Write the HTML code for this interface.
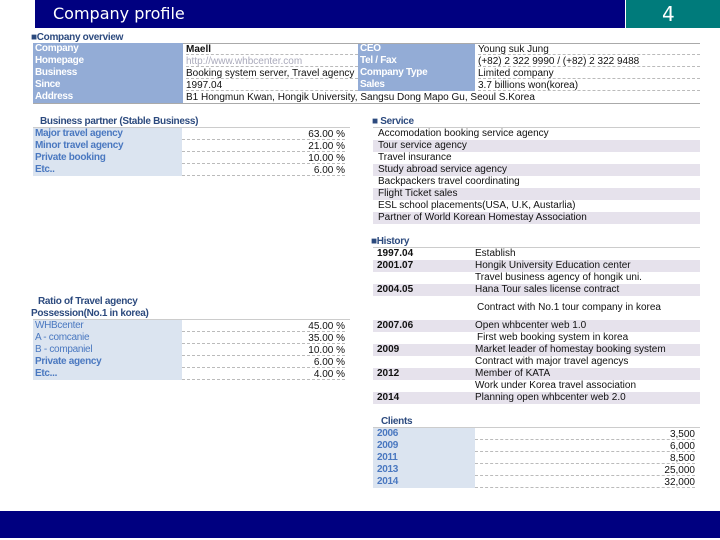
<!DOCTYPE html><html><head><style>
*{box-sizing:border-box}
body{margin:0;width:720px;height:540px;background:#fff;position:relative;overflow:hidden;font-family:"Liberation Sans",sans-serif;font-size:10px;color:#111}
div{position:absolute;white-space:nowrap}
.r{height:12px;line-height:12px}
.lb{color:#fff;font-weight:bold;letter-spacing:-0.3px}
.lt{color:#4a78c0;font-weight:bold;letter-spacing:-0.3px}
.hd{color:#2c4a7e;font-weight:bold;letter-spacing:-0.3px}
.dl{border-bottom:1px dashed #bbb;line-height:13px}
.sh{background:#e6e2ec}
.bl{background:#dbe4f0}
</style></head><body>
<div style="left:35px;top:0;width:590px;height:28px;background:#000080"></div>
<div style="left:53px;top:4px;color:#fff;font-size:16px;font-family:'DejaVu Sans',sans-serif">Company profile</div>
<div style="left:625px;top:0;width:95px;height:28px;background:#007b7b;border-left:1px solid #fff"></div>
<div style="left:662px;top:2px;color:#fff;font-size:20px;font-family:'DejaVu Sans',sans-serif">4</div>

<div class="hd" style="left:31px;top:32px">■Company overview</div>
<div style="left:33px;top:43px;width:150px;height:60px;background:#93acd6"></div>
<div style="left:358px;top:43px;width:117px;height:48px;background:#93acd6"></div>
<div style="left:183px;top:43px;width:517px;border-top:1px solid #aaa"></div>
<div style="left:33px;top:103px;width:667px;border-top:1px solid #aaa"></div>
<div class="r lb" style="left:35px;top:43px">Company</div>
<div class="r lb" style="left:35px;top:55px">Homepage</div>
<div class="r lb" style="left:35px;top:67px">Business</div>
<div class="r lb" style="left:35px;top:79px">Since</div>
<div class="r lb" style="left:35px;top:91px">Address</div>
<div class="r dl" style="left:186px;top:43px;width:172px;font-weight:bold">Maell</div>
<div class="r dl" style="left:186px;top:55px;width:172px;color:#aab">http://www.whbcenter.com</div>
<div class="r dl" style="left:186px;top:67px;width:172px">Booking system server, Travel agency</div>
<div class="r dl" style="left:186px;top:79px;width:172px">1997.04</div>
<div class="r" style="left:186px;top:91px;line-height:13px">B1 Hongmun Kwan, Hongik University, Sangsu Dong Mapo Gu, Seoul S.Korea</div>
<div class="r lb" style="left:360px;top:43px">CEO</div>
<div class="r lb" style="left:360px;top:55px">Tel / Fax</div>
<div class="r lb" style="left:360px;top:67px">Company Type</div>
<div class="r lb" style="left:360px;top:79px">Sales</div>
<div class="r dl" style="left:478px;top:43px;width:222px">Young suk Jung</div>
<div class="r dl" style="left:478px;top:55px;width:222px">(+82) 2 322 9990 / (+82) 2 322 9488</div>
<div class="r dl" style="left:478px;top:67px;width:222px">Limited company</div>
<div class="r dl" style="left:478px;top:79px;width:222px">3.7 billions won(korea)</div>

<div class="hd" style="left:40px;top:116px">Business partner (Stable Business)</div>
<div style="left:33px;top:127px;width:317px;border-top:1px solid #ccc"></div>
<div class="bl" style="left:33px;top:128px;width:149px;height:48px"></div>
<div class="r lt" style="left:35px;top:128px">Major travel agency</div>
<div class="r lt" style="left:35px;top:140px">Minor travel agency</div>
<div class="r lt" style="left:35px;top:152px">Private booking</div>
<div class="r lt" style="left:35px;top:164px">Etc..</div>
<div class="r dl" style="left:182px;top:128px;width:163px;text-align:right">63.00 %</div>
<div class="r dl" style="left:182px;top:140px;width:163px;text-align:right">21.00 %</div>
<div class="r dl" style="left:182px;top:152px;width:163px;text-align:right">10.00 %</div>
<div class="r dl" style="left:182px;top:164px;width:163px;text-align:right">6.00 %</div>

<div class="hd" style="left:372px;top:116px">■ Service</div>
<div style="left:373px;top:127px;width:327px;border-top:1px solid #ccc"></div>
<div class="r" style="left:373px;top:128px;width:327px;padding-left:5px">Accomodation booking service agency</div>
<div class="r sh" style="left:373px;top:140px;width:327px;padding-left:5px">Tour service agency</div>
<div class="r" style="left:373px;top:152px;width:327px;padding-left:5px">Travel insurance</div>
<div class="r sh" style="left:373px;top:164px;width:327px;padding-left:5px">Study abroad service agency</div>
<div class="r" style="left:373px;top:176px;width:327px;padding-left:5px">Backpackers travel coordinating</div>
<div class="r sh" style="left:373px;top:188px;width:327px;padding-left:5px">Flight Ticket sales</div>
<div class="r" style="left:373px;top:200px;width:327px;padding-left:5px">ESL school placements(USA, U.K, Austarlia)</div>
<div class="r sh" style="left:373px;top:212px;width:327px;padding-left:5px">Partner of World Korean Homestay Association</div>

<div class="hd" style="left:371px;top:236px">■History</div>
<div style="left:373px;top:247px;width:327px;border-top:1px solid #ccc"></div>
<div class="r" style="left:373px;top:248px;width:327px"><b style="margin-left:4px">1997.04</b><span style="position:absolute;left:102px">Establish</span></div>
<div class="r sh" style="left:373px;top:260px;width:327px"><b style="margin-left:4px">2001.07</b><span style="position:absolute;left:102px">Hongik University Education center</span></div>
<div class="r" style="left:373px;top:272px;width:327px"><span style="position:absolute;left:102px">Travel business agency of hongik uni.</span></div>
<div class="r sh" style="left:373px;top:284px;width:327px"><b style="margin-left:4px">2004.05</b><span style="position:absolute;left:102px">Hana Tour sales license contract</span></div>
<div class="r" style="left:373px;top:302px;width:327px"><span style="position:absolute;left:104px">Contract with No.1 tour company in korea</span></div>
<div class="r sh" style="left:373px;top:320px;width:327px"><b style="margin-left:4px">2007.06</b><span style="position:absolute;left:102px">Open whbcenter web 1.0</span></div>
<div class="r" style="left:373px;top:332px;width:327px"><span style="position:absolute;left:104px">First web booking system in korea</span></div>
<div class="r sh" style="left:373px;top:344px;width:327px"><b style="margin-left:4px">2009</b><span style="position:absolute;left:102px">Market leader of homestay booking system</span></div>
<div class="r" style="left:373px;top:356px;width:327px"><span style="position:absolute;left:102px">Contract with major travel agencys</span></div>
<div class="r sh" style="left:373px;top:368px;width:327px"><b style="margin-left:4px">2012</b><span style="position:absolute;left:102px">Member of KATA</span></div>
<div class="r" style="left:373px;top:380px;width:327px"><span style="position:absolute;left:102px">Work under Korea travel association</span></div>
<div class="r sh" style="left:373px;top:392px;width:327px"><b style="margin-left:4px">2014</b><span style="position:absolute;left:102px">Planning open whbcenter web 2.0</span></div>

<div class="hd" style="left:38px;top:296px">Ratio of Travel agency</div>
<div class="hd" style="left:31px;top:308px">Possession(No.1 in korea)</div>
<div style="left:33px;top:319px;width:317px;border-top:1px solid #ccc"></div>
<div class="bl" style="left:33px;top:320px;width:149px;height:60px"></div>
<div class="r lt" style="left:35px;top:320px;font-weight:normal">WHBcenter</div>
<div class="r lt" style="left:35px;top:332px;font-weight:normal">A - comcanie</div>
<div class="r lt" style="left:35px;top:344px;font-weight:normal">B - companiel</div>
<div class="r lt" style="left:35px;top:356px">Private agency</div>
<div class="r lt" style="left:35px;top:368px">Etc...</div>
<div class="r dl" style="left:182px;top:320px;width:163px;text-align:right">45.00 %</div>
<div class="r dl" style="left:182px;top:332px;width:163px;text-align:right">35.00 %</div>
<div class="r dl" style="left:182px;top:344px;width:163px;text-align:right">10.00 %</div>
<div class="r dl" style="left:182px;top:356px;width:163px;text-align:right">6.00 %</div>
<div class="r dl" style="left:182px;top:368px;width:163px;text-align:right">4.00 %</div>

<div class="hd" style="left:381px;top:416px">Clients</div>
<div style="left:373px;top:427px;width:327px;border-top:1px solid #ccc"></div>
<div class="bl" style="left:373px;top:428px;width:102px;height:60px"></div>
<div class="r lt" style="left:377px;top:428px">2006</div>
<div class="r lt" style="left:377px;top:440px">2009</div>
<div class="r lt" style="left:377px;top:452px">2011</div>
<div class="r lt" style="left:377px;top:464px">2013</div>
<div class="r lt" style="left:377px;top:476px">2014</div>
<div class="r dl" style="left:475px;top:428px;width:220px;text-align:right">3,500</div>
<div class="r dl" style="left:475px;top:440px;width:220px;text-align:right">6,000</div>
<div class="r dl" style="left:475px;top:452px;width:220px;text-align:right">8,500</div>
<div class="r dl" style="left:475px;top:464px;width:220px;text-align:right">25,000</div>
<div class="r dl" style="left:475px;top:476px;width:220px;text-align:right">32,000</div>

<div style="left:0;top:511px;width:720px;height:27px;background:#000080"></div>
</body></html>
